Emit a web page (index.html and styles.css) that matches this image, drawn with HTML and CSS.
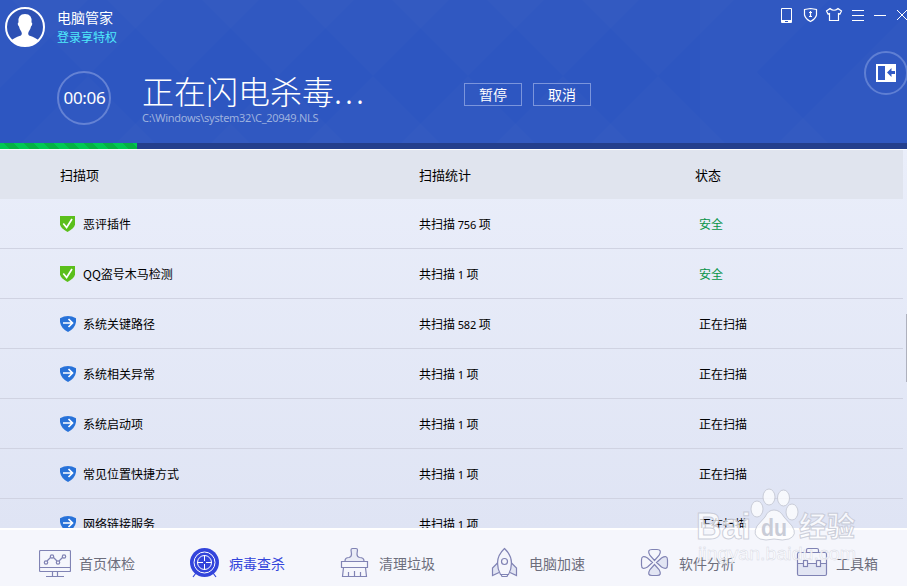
FILE: index.html
```html
<!DOCTYPE html>
<html lang="zh-CN">
<head>
    <meta charset="UTF-8">
    <meta name="viewport" content="width=device-width, initial-scale=1.0">
    <title>电脑管家</title>
    <link rel="stylesheet" href="styles.css">
</head>
<body>

    <!-- shared row icons -->
    <svg class="defs" width="0" height="0">
        <symbol id="safe" viewBox="0 0 16 16">
            <path d="M0 0H15V8.500Q14.500 12 7.500 16Q.5 12 0 8.500Z" fill="#5bbf1b"/>
            <path d="M3.300 7.500L6.600 11.500L12 3" fill="none" stroke="#fff" stroke-width="1.700"/>
        </symbol>
        <symbol id="scan" viewBox="0 0 16 16">
            <path d="M0 2.200Q8-2 16 2.200V6Q15 12.500 8 16Q1 12.500 0 6Z" fill="#2872d9"/>
            <path d="M3 7H12.500M8.500 3L12.500 7L8.500 11" fill="none" stroke="#fff" stroke-width="1.700"/>
        </symbol>
    </svg>

    <div class="window">
        <header class="header">
            <svg class="pattern" width="907" height="143">
                <g fill="#fff" fill-opacity=".016">
                    <path d="M88 76L12 0H164Z"/>
                    <path d="M183 76L107 0H259Z"/>
                    <path d="M278 76L202 0H354Z"/>
                    <path d="M373 76L297 0H449Z"/>
                    <path d="M468 76L392 0H544Z"/>
                    <path d="M563 76L487 0H639Z"/>
                    <path d="M658 76L582 0H734Z"/>
                    <path d="M88 76L21 143H155Z"/>
                    <path d="M183 76L116 143H250Z"/>
                    <path d="M278 76L211 143H345Z"/>
                    <path d="M373 76L306 143H440Z"/>
                    <path d="M468 76L401 143H535Z"/>
                    <path d="M563 76L496 143H630Z"/>
                    <path d="M658 76L591 143H725Z"/>
                    <path d="M757 72L829 0H700V143H828Z"/>
                    <path d="M845 76L907 14V143H778Z"/>
                    <path d="M0 0H88L0 88Z"/>
                </g>
            </svg>

            <div class="top">
                <div class="account">
                    <svg width="40" height="40" viewBox="0 0 40 40">
                        <circle cx="20" cy="20" r="19" fill="#2d51b4"/>
                        <path d="M6 34Q8 31 16 28.500Q17.500 27.500 16.500 25Q14.500 22.500 14 19.500Q12.500 19 12.800 16L13.500 15.500Q12.500 7 20 7Q27.500 7 26.500 15.500L27.200 16Q27.500 19 26 19.500Q25.500 22.500 23.500 25Q22.500 27.500 24 28.500Q32 31 34 34Q28 39 20 39Q12 39 6 34Z" fill="#fff"/>
                        <circle cx="20" cy="20" r="19" fill="none" stroke="#fff" stroke-width="2"/>
                    </svg>
                    <div>
                        <div class="name">电脑管家</div>
                        <a class="login" href="#">登录享特权</a>
                    </div>
                </div>
                <svg class="controls" width="127" height="20" viewBox="780 5 127 20" fill="none" stroke="#fff">
                    <path d="M781.500 8.500H791.500V22.500H781.500Z"/>
                    <path d="M781 21.500H785M788 21.500H792M781 20.500H792"/>
                    <path d="M804.500 9.500L810.500 8.500L816.500 9.500V15Q815.500 19 810.500 21.500Q805.500 19 804.500 15Z" stroke-width="1.200"/>
                    <path d="M810.500 11V17M809 12.500H812M809 16.500H812" stroke-width="1.200"/>
                    <path d="M830 8.500L826.500 11L828 14L829.500 13.500V20.500H838.500V13.500L840 14L841.500 11L838 8.500Q834 12 830 8.500Z" stroke-width="1.200"/>
                    <path d="M852 10.500H864M852 15.500H864M852 20.500H864M874 15.500H886"/>
                    <path d="M897 10L907 20M897 20L907 10"/>
                </svg>
            </div>

            <div class="scanning">
                <div class="timer">00:06</div>
                <div class="progress-text">
                    <h1>正在闪电杀毒<span>...</span></h1>
                    <p>C:\Windows\system32\C_20949.NLS</p>
                </div>
                <div class="actions">
                    <button type="button">暂停</button>
                    <button type="button">取消</button>
                </div>
            </div>

            <div class="side-toggle">
                <svg width="20" height="18" viewBox="0 0 20 18">
                    <path d="M0 0H20V18H0Z" fill="#fff"/>
                    <path d="M2 2H9V16H2ZM11 8.500L15.500 4V7H19V10H15.500V13Z" fill="#3059c5"/>
                </svg>
            </div>
        </header>

        <div class="bar"><div class="bar-done" style="width: 137px"></div></div>

        <main class="list">
            <div class="row head"><span>扫描项</span><span>扫描统计</span><span>状态</span></div>
            <div class="row">
                <span class="item"><svg width="16" height="16"><use href="#safe"/></svg>恶评插件</span>
                <span>共扫描 <b>756</b> 项</span><span class="state ok">安全</span>
            </div>
            <div class="row">
                <span class="item"><svg width="16" height="16"><use href="#safe"/></svg>QQ盗号木马检测</span>
                <span>共扫描 <b>1</b> 项</span><span class="state ok">安全</span>
            </div>
            <div class="row">
                <span class="item"><svg width="16" height="16"><use href="#scan"/></svg>系统关键路径</span>
                <span>共扫描 <b>582</b> 项</span><span class="state">正在扫描</span>
            </div>
            <div class="row">
                <span class="item"><svg width="16" height="16"><use href="#scan"/></svg>系统相关异常</span>
                <span>共扫描 <b>1</b> 项</span><span class="state">正在扫描</span>
            </div>
            <div class="row">
                <span class="item"><svg width="16" height="16"><use href="#scan"/></svg>系统启动项</span>
                <span>共扫描 <b>1</b> 项</span><span class="state">正在扫描</span>
            </div>
            <div class="row">
                <span class="item"><svg width="16" height="16"><use href="#scan"/></svg>常见位置快捷方式</span>
                <span>共扫描 <b>1</b> 项</span><span class="state">正在扫描</span>
            </div>
            <div class="row">
                <span class="item"><svg width="16" height="16"><use href="#scan"/></svg>网络链接服务</span>
                <span>共扫描 <b>1</b> 项</span><span class="state">正在扫描</span>
            </div>
            <div class="scrollbar"></div>
        </main>

        <nav class="tabs">
            <a class="tab" href="#">
                <svg width="32" height="32" viewBox="0 0 32 32">
                    <rect x=".5" y="3.500" width="31" height="21" rx="1"/>
                    <path d="M1 20.500H31M13.500 25V29.500M18.500 25V29.500M7 29.500H25M8 14L12 10M14 10L18 14M20 14L24 10"/>
                    <circle cx="7" cy="15.500" r="1.700"/><circle cx="13" cy="9.500" r="1.700"/><circle cx="19" cy="15.500" r="1.700"/><circle cx="25" cy="9.500" r="1.700"/>
                </svg>首页体检
            </a>
            <a class="tab active" href="#">
                <svg width="32" height="32" viewBox="-1 0 32 32">
                    <path d="M6 26L3 30M23 26L26 30" stroke="#3344db"/>
                    <circle cx="14.500" cy="15.500" r="14.500" fill="#3344db" stroke="none"/>
                    <g stroke="#fff" stroke-width="1"><circle cx="14.500" cy="15.500" r="10.500"/><circle cx="14.500" cy="15.500" r="7"/>
                    <path d="M14.500 8V14M14.500 17V23M7 15.500H13M16 15.500H22"/></g>
                </svg>病毒查杀
            </a>
            <a class="tab" href="#">
                <svg width="32" height="32" viewBox="-1 0 32 32">
                    <path d="M5 14Q5 10.500 9 10.500Q11.500 10 11.500 7L11 3Q11 1.500 12.500 1.500H16Q17.500 1.500 17.500 3L17 7Q17 10 19.500 10.500Q24 10.500 24 14" fill="#e9ebf6"/>
                    <path d="M1.500 14.500H27.500V20.500H1.500ZM3.500 20.500L2.500 29.500H26.500L25.500 20.500M8.500 29V25M14.500 29V24M20.500 29V25"/>
                </svg>清理垃圾
            </a>
            <a class="tab" href="#">
                <svg width="32" height="32" viewBox="-1 0 32 32">
                    <path d="M8 15.500L2.500 21V28.500L9 25.500M21 15.500L26.500 21V28.500L20 25.500" fill="#e2e5f3"/>
                    <path d="M14.500 1.500Q7.500 8 7.500 16Q7.500 22 10.500 27.500H18.500Q21.500 22 21.500 16Q21.500 8 14.500 1.500ZM11 27.500L12 29.500H17L18 27.500"/>
                    <circle cx="14.500" cy="14.500" r="3"/>
                </svg>电脑加速
            </a>
            <a class="tab" href="#">
                <svg width="32" height="32" viewBox="-1 0 32 32">
                    <path d="M14.500 13.500L10 8.500Q6.500 2.500 12 2.500H17Q22.500 2.500 19 8.500Z"/>
                    <path d="M12.500 15.500L7.500 11Q1.500 7.500 1.500 13V18Q1.500 23.500 7.500 20Z"/>
                    <path d="M16.500 15.500L21.500 11Q27.500 7.500 27.500 13V18Q27.500 23.500 21.500 20Z" fill="#e2e5f3"/>
                    <path d="M14.500 17.500L10 22.500Q6.500 28.500 12 28.500H17Q22.500 28.500 19 22.500Z" fill="#e2e5f3"/>
                </svg>软件分析
            </a>
            <a class="tab last" href="#">
                <svg width="32" height="32" viewBox="0 0 32 32">
                    <path d="M2 17H30V28H2Z" fill="#e2e5f3" stroke="none"/>
                    <rect x="1.500" y="5.500" width="29" height="23" rx="1.500"/>
                    <path d="M10.500 5V3Q10.500 1.500 12 1.500H21Q22.500 1.500 22.500 3V5M2 16.500H7M12 16.500H20M25 16.500H30"/>
                    <rect x="7.500" y="13.500" width="4" height="6" fill="#f5f6fc"/><rect x="20.500" y="13.500" width="4" height="6" fill="#f5f6fc"/>
                </svg>工具箱
            </a>
        </nav>

        <svg class="watermark" width="180" height="90" viewBox="690 480 180 90">
            <g fill="#fff" fill-opacity=".75" stroke="#bfc3d0" stroke-opacity=".8">
                <text x="696" y="539" class="wm-logo" textLength="55" lengthAdjust="spacingAndGlyphs">Bai</text>
                <ellipse cx="757" cy="509" rx="6" ry="8"/><ellipse cx="769" cy="497" rx="6" ry="8"/>
                <ellipse cx="783.500" cy="498" rx="6" ry="8"/><ellipse cx="792" cy="512" rx="6" ry="8"/>
                <path d="M774 510Q780 510 784 517L792 526Q798 535 789 539Q783 541 774 539Q765 541 760 539Q752 535 757 526L765 517Q768 510 774 510Z"/>
                <text x="799" y="537" class="wm-cn" textLength="56">经验</text>
            </g>
            <text x="761" y="536" class="wm-du" textLength="26" lengthAdjust="spacingAndGlyphs">du</text>
            <text x="698" y="560" class="wm-url" textLength="158" lengthAdjust="spacingAndGlyphs">jingyan.baidu.com</text>
        </svg>
    </div>

</body>
</html>
```

FILE: styles.css
```css
body {
    margin: 0;
    font-family: "Noto Sans CJK SC", sans-serif;
    font-size: 12px;
    color: #000;
}
a {
    text-decoration: none;
}
svg {
    display: block;
    flex: none;
}
.defs {
    position: absolute;
}
.window {
    position: relative;
    width: 907px;
    height: 586px;
    overflow: hidden;
    display: flex;
    flex-direction: column;
    background-color: #f5f6fc;
}
.header {
    position: relative;
    height: 143px;
    flex: none;
    color: white;
    background-color: #2d56c1;
}
.pattern {
    position: absolute;
    top: 0;
    left: 0;
}
.top {
    position: relative;
    display: flex;
    justify-content: space-between;
    align-items: flex-start;
    padding: 5px 0 0 5px;
    height: 58px;
}
.account {
    display: flex;
    gap: 12px;
    padding-top: 2px;
}
.name {
    font-size: 14px;
    line-height: 20px;
}
.login {
    display: block;
    margin-top: 1px;
    line-height: 18px;
    color: #4fe9fb;
}
.scanning {
    position: relative;
    display: flex;
    align-items: flex-start;
    padding: 8px 0 0 57px;
}
.timer {
    box-sizing: border-box;
    width: 54px;
    height: 54px;
    border: 2px solid #6482d4;
    border-radius: 50%;
    font: 17px/50px "Noto Sans", sans-serif;
    letter-spacing: -0.3px;
    text-indent: 1px;
    text-align: center;
    white-space: nowrap;
}
.progress-text {
    width: 322px;
    padding-left: 31px;
}
h1 {
    margin: -1px 0 1px;
    font-size: 32px;
    font-weight: 300;
    line-height: 40px;
    white-space: nowrap;
}
h1 span {
    letter-spacing: 3px;
}
.progress-text p {
    margin: 0;
    font: 11px/14px "Noto Sans", sans-serif;
    letter-spacing: -0.27px;
    color: #9db1df;
}
.actions {
    display: flex;
    gap: 11px;
    padding-top: 12px;
}
.actions button {
    width: 58px;
    height: 23px;
    padding: 0 0 2px;
    border: 1px solid #7b95dc;
    background: none;
    color: white;
    font: 14px/18px "Noto Sans CJK SC", sans-serif;
}
.side-toggle {
    position: absolute;
    top: 51px;
    left: 864px;
    box-sizing: border-box;
    width: 44px;
    height: 44px;
    border: 2px solid #5f7fd3;
    border-radius: 50%;
    display: flex;
    align-items: center;
    justify-content: center;
}
.bar {
    height: 6px;
    flex: none;
    background-color: #243f8d;
}
.bar-done {
    height: 6px;
    background: repeating-linear-gradient(45deg, #00c853 0 7px, #05b143 7px 14px);
}
.list {
    position: relative;
    height: 379px;
    flex: none;
    overflow: hidden;
    box-sizing: border-box;
    border-top: 1px solid white;
    background: linear-gradient(#eaeefa, #dfe4f4);
}
.row {
    box-sizing: border-box;
    display: grid;
    grid-template-columns: 359px 276px 1fr;
    align-items: center;
    width: 903px;
    height: 50px;
    padding-left: 60px;
    border-bottom: 1px solid #d0d3e2;
}
.head {
    height: 49px;
    border: none;
    background-color: #e0e4ee;
    font-size: 13px;
}
.item {
    display: flex;
    align-items: center;
    gap: 7px;
}
.row b {
    font: 11px "Noto Sans", sans-serif;
    letter-spacing: -0.2px;
}
.state {
    padding-left: 4px;
}
.ok {
    color: #079447;
}
.scrollbar {
    position: absolute;
    top: 164px;
    right: 0;
    width: 1px;
    height: 68px;
    background-color: #aeb1be;
}
.tabs {
    height: 58px;
    box-sizing: border-box;
    border-top: 2px solid white;
    display: flex;
    padding: 17px 0 0 39px;
}
.tab {
    display: flex;
    align-items: center;
    gap: 8px;
    width: 150px;
    height: 32px;
    flex: none;
    font-size: 14px;
    color: #6d6e7c;
}
.tab svg {
    fill: none;
    stroke: #8083b4;
    stroke-width: 1.2;
}
.active {
    color: #3344db;
}
.last {
    margin-left: 7px;
}
.watermark {
    position: absolute;
    left: 690px;
    top: 480px;
}
.wm-logo {
    font: bold 37px "Liberation Sans", sans-serif;
}
.wm-cn {
    font: bold 28px "Noto Sans CJK SC", sans-serif;
}
.wm-du {
    font: bold 24px "Liberation Sans", sans-serif;
    fill: #c9ccd7;
}
.wm-url {
    font: 18px "Liberation Sans", sans-serif;
    fill: #fff;
    stroke: #cfd2dd;
    stroke-width: 0.4;
    opacity: 0.85;
}
```
